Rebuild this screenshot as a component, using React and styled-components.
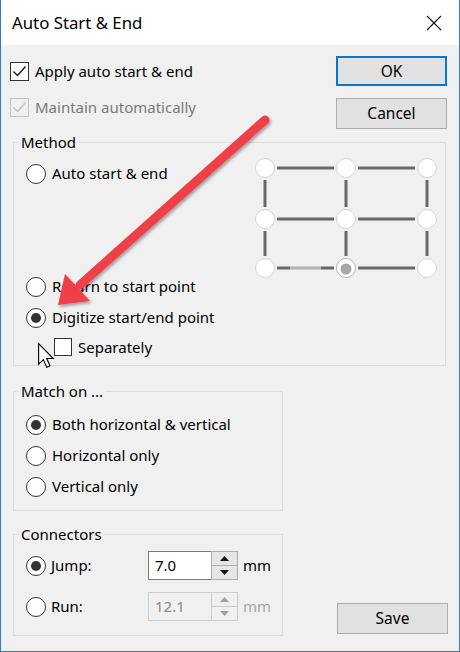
import React from 'react';
import styled, { createGlobalStyle } from 'styled-components';

const Global = createGlobalStyle`
  html, body { margin: 0; padding: 0; background: #ffffff; }
  body { font-family: "Noto Sans", "Open Sans", sans-serif; }
  * { box-sizing: border-box; }
`;

const Window = styled.div`
  position: relative;
  width: 460px;
  height: 652px;
  background: #f0f0f0;
  border: 1px solid #2b7bd6;
  border-top: none;
  display: flex;
  flex-direction: column;
  font-family: "Noto Sans", "Open Sans", sans-serif;
  font-size: 15px;
  color: #000;
  overflow: hidden;
`;

const TitleBar = styled.div`
  height: 45px;
  flex: none;
  background: #ffffff;
  display: flex;
  align-items: center;
  padding-left: 11px;
  font-size: 16.8px;
`;

const TitleText = styled.span`
  flex: 1;
  padding-bottom: 1px;
`;

const CloseBox = styled.div`
  width: 46px;
  height: 45px;
  display: flex;
  align-items: center;
  justify-content: center;
  margin-right: 2px;
`;

const Body = styled.div`
  flex: 1;
  display: flex;
  flex-direction: column;
  padding: 8px 12px 0 9px;
`;

const TopSection = styled.div`
  display: flex;
  justify-content: space-between;
  align-items: flex-start;
`;

const CheckColumn = styled.div`
  display: flex;
  flex-direction: column;
`;

const ButtonColumn = styled.div`
  display: flex;
  flex-direction: column;
  gap: 12px;
  padding-top: 3px;
`;

const Button = styled.div`
  width: 111px;
  height: ${p => (p.$primary ? 30 : 31)}px;
  background: #e1e1e1;
  border: ${p => (p.$primary ? '2px solid #0078d7' : '1px solid #adadad')};
  display: flex;
  align-items: center;
  justify-content: center;
  font-size: 15.5px;
  padding-bottom: 1px;
`;

const Row = styled.div`
  display: flex;
  align-items: center;
  height: ${p => p.$h || 31}px;
  margin-top: ${p => p.$mt || 0}px;
  padding-left: ${p => p.$indent || 0}px;
  gap: 6px;
  color: ${p => (p.$disabled ? '#7a7a7a' : '#000')};
  white-space: nowrap;
`;

const Label = styled.span`
  padding-bottom: 1px;
`;

const CheckBoxBox = styled.div`
  width: ${p => p.$size || 19}px;
  height: ${p => p.$size || 19}px;
  flex: none;
  border: 1px solid ${p => (p.$disabled ? '#c2c2c2' : '#333333')};
  background: ${p => (p.$disabled ? '#f0f0f0' : '#ffffff')};
  display: flex;
  align-items: center;
  justify-content: center;
`;

const RadioCircle = styled.div`
  width: 20px;
  height: 20px;
  flex: none;
  border-radius: 50%;
  border: 1px solid #333333;
  background: #ffffff;
  display: flex;
  align-items: center;
  justify-content: center;
  &::after {
    content: '';
    display: ${p => (p.$checked ? 'block' : 'none')};
    width: 10px;
    height: 10px;
    border-radius: 50%;
    background: #333333;
  }
`;

const Group = styled.fieldset`
  margin: ${p => p.$mt || 0}px 0 0 3px;
  width: ${p => p.$w}px;
  border: 1px solid #dcdcdc;
  padding: ${p => p.$pt || 0}px 8px ${p => p.$pb || 0}px 12px;
  min-width: 0;
`;

const Legend = styled.legend`
  margin-left: -7px;
  padding: 0 2px;
  height: 20px;
  line-height: 20px;
  font-size: 15px;
`;

const MethodBody = styled.div`
  display: flex;
  align-items: flex-start;
`;

const OptionList = styled.div`
  flex: 1;
  display: flex;
  flex-direction: column;
`;

const Diagram = styled.svg`
  flex: none;
  display: block;
`;

const BottomSection = styled.div`
  display: flex;
  justify-content: space-between;
  align-items: flex-end;
  margin-top: 13px;
  margin-right: -1px;
`;

const SaveWrap = styled.div`
  margin-bottom: 2px;
`;

const ConnRow = styled.div`
  display: flex;
  align-items: center;
  height: 41px;
`;

const ConnLabel = styled.span`
  width: 97px;
  margin-left: 5px;
  flex: none;
  padding-bottom: 1px;
`;

const Spin = styled.div`
  display: flex;
  height: 29px;
  width: 90px;
`;

const SpinInput = styled.div`
  width: 63px;
  height: 100%;
  border: 1px solid ${p => (p.$disabled ? '#cccccc' : '#7a7a7a')};
  border-right: none;
  background: ${p => (p.$disabled ? '#f0f0f0' : '#ffffff')};
  color: ${p => (p.$disabled ? '#8a8a8a' : '#000')};
  display: flex;
  align-items: center;
  padding-left: 6px;
  padding-bottom: 2px;
`;

const SpinButtons = styled.div`
  width: 27px;
  height: 100%;
  display: flex;
  flex-direction: column;
  border: 1px solid ${p => (p.$disabled ? '#cccccc' : '#adadad')};
  background: ${p => (p.$disabled ? '#f0f0f0' : '#ffffff')};
`;

const SpinBtn = styled.div`
  flex: 1;
  display: flex;
  align-items: center;
  justify-content: center;
  background: ${p => (p.$disabled ? '#f0f0f0' : '#e6e6e6')};
  border-top: ${p => (p.$bottom ? `1px solid ${p.$disabled ? '#cccccc' : '#adadad'}` : 'none')};
`;

const Unit = styled.span`
  margin-left: 5px;
  padding-bottom: 1px;
  color: ${p => (p.$disabled ? '#a6a6a6' : '#000')};
`;

const Overlay = styled.svg`
  position: absolute;
  left: -1px;
  top: 0;
  pointer-events: none;
`;

function Check({ checked, disabled, size }) {
  return (
    <CheckBoxBox $disabled={disabled} $size={size}>
      {checked && (
        <svg width="15" height="15" viewBox="0 0 15 15">
          <path d="M1.5 7.5 L5.5 11.5 L13.5 2.5" fill="none" stroke={disabled ? '#c2c2c2' : '#222'} strokeWidth="1.5" />
        </svg>
      )}
    </CheckBoxBox>
  );
}

function Radio({ checked, children }) {
  return (
    <Row>
      <RadioCircle $checked={checked} />
      <Label>{children}</Label>
    </Row>
  );
}

function Tri({ up, disabled }) {
  return (
    <svg width="9" height="5" viewBox="0 0 9 5">
      <path d={up ? 'M0 5 L4.5 0 L9 5 Z' : 'M0 0 L9 0 L4.5 5 Z'} fill={disabled ? '#a0a0a0' : '#111'} />
    </svg>
  );
}

function SpinBox({ value, disabled }) {
  return (
    <Spin>
      <SpinInput $disabled={disabled}>{value}</SpinInput>
      <SpinButtons $disabled={disabled}>
        <SpinBtn $disabled={disabled}><Tri up disabled={disabled} /></SpinBtn>
        <SpinBtn $disabled={disabled} $bottom><Tri disabled={disabled} /></SpinBtn>
      </SpinButtons>
    </Spin>
  );
}

function GridDiagram() {
  const xs = [264, 345, 426];
  const ys = [167, 218, 267];
  const dark = '#686868';
  return (
    <Diagram width="182" height="122" viewBox="254 157 182 122">
      {ys.map(y => (
        <g key={'h' + y}>
          {y !== 267 ? (
            <line x1="276" y1={y} x2="333" y2={y} stroke={dark} strokeWidth="3" />
          ) : (
            <>
              <line x1="276" y1={y} x2="289" y2={y} stroke={dark} strokeWidth="3" />
              <line x1="289" y1={y} x2="320" y2={y} stroke="#b0b0b0" strokeWidth="3" />
              <line x1="320" y1={y} x2="333" y2={y} stroke={dark} strokeWidth="3" />
            </>
          )}
          <line x1="357" y1={y} x2="414" y2={y} stroke={dark} strokeWidth="3" />
        </g>
      ))}
      {xs.map(x => (
        <g key={'v' + x}>
          <line x1={x} y1="179" x2={x} y2="206" stroke={dark} strokeWidth="3" />
          <line x1={x} y1="230" x2={x} y2="255" stroke={dark} strokeWidth="3" />
        </g>
      ))}
      {ys.map(y =>
        xs.map(x => (
          <circle key={x + '-' + y} cx={x} cy={y} r="9.5" fill="#ffffff" stroke="#d4d4d4" strokeWidth="1" />
        ))
      )}
      <circle cx="345" cy="267" r="9.5" fill="#ffffff" stroke="#b8b8b8" strokeWidth="1" />
      <circle cx="345" cy="268" r="5.5" fill="#a8a8a8" />
    </Diagram>
  );
}

function ArrowOverlay() {
  return (
    <Overlay width="460" height="652" viewBox="0 0 460 652">
      <defs>
        <filter id="sh" x="-20%" y="-20%" width="140%" height="140%">
          <feDropShadow dx="1.5" dy="2" stdDeviation="1.8" floodColor="#000" floodOpacity="0.35" />
        </filter>
      </defs>
      <g filter="url(#sh)">
        <line x1="265" y1="120" x2="80" y2="285" stroke="#ef3f48" strokeWidth="9" strokeLinecap="round" />
        <polygon points="58,305 65,274 90,301" fill="#ef3f48" />
      </g>
      <g transform="translate(38 343) scale(1.25)">
        <path d="M0.5 0.5 L0.5 17 L4.3 13.3 L7 19.5 L9.6 18.4 L7 12.4 L12.2 12.4 Z" fill="#ffffff" stroke="#000" strokeWidth="0.9" strokeLinejoin="miter" />
      </g>
    </Overlay>
  );
}

export default function App() {
  return (
    <>
      <Global />
      <Window>
        <TitleBar>
          <TitleText>Auto Start &amp; End</TitleText>
          <CloseBox>
            <svg width="16" height="16" viewBox="0 0 16 16">
              <path d="M1 1 L15 15 M15 1 L1 15" stroke="#111" strokeWidth="1.1" />
            </svg>
          </CloseBox>
        </TitleBar>
        <Body>
          <TopSection>
            <CheckColumn>
              <Row $h={36}>
                <Check checked />
                <Label>Apply auto start &amp; end</Label>
              </Row>
              <Row $h={36} $disabled>
                <Check checked disabled />
                <Label>Maintain automatically</Label>
              </Row>
            </CheckColumn>
            <ButtonColumn>
              <Button $primary>OK</Button>
              <Button>Cancel</Button>
            </ButtonColumn>
          </TopSection>

          <Group $mt={3} $w={433} $pt={6} $pb={4}>
            <Legend>Method</Legend>
            <MethodBody>
              <OptionList>
                <Radio>Auto start &amp; end</Radio>
                <Row $mt={82}>
                  <RadioCircle />
                  <Label>Return to start point</Label>
                </Row>
                <Radio checked>Digitize start/end point</Radio>
                <Row $h={28} $indent={28}>
                  <Check size={18} />
                  <Label>Separately</Label>
                </Row>
              </OptionList>
              <GridDiagram />
            </MethodBody>
          </Group>

          <Group $mt={15} $w={270} $pt={8} $pb={8}>
            <Legend>Match on ...</Legend>
            <Radio checked>Both horizontal &amp; vertical</Radio>
            <Radio>Horizontal only</Radio>
            <Radio>Vertical only</Radio>
          </Group>

          <BottomSection>
            <Group $w={270} $pt={1} $pb={8}>
              <Legend>Connectors</Legend>
              <ConnRow>
                <RadioCircle $checked />
                <ConnLabel>Jump:</ConnLabel>
                <SpinBox value="7.0" />
                <Unit>mm</Unit>
              </ConnRow>
              <ConnRow>
                <RadioCircle />
                <ConnLabel>Run:</ConnLabel>
                <SpinBox value="12.1" disabled />
                <Unit $disabled>mm</Unit>
              </ConnRow>
            </Group>
            <SaveWrap>
              <Button>Save</Button>
            </SaveWrap>
          </BottomSection>
        </Body>
        <ArrowOverlay />
      </Window>
    </>
  );
}
